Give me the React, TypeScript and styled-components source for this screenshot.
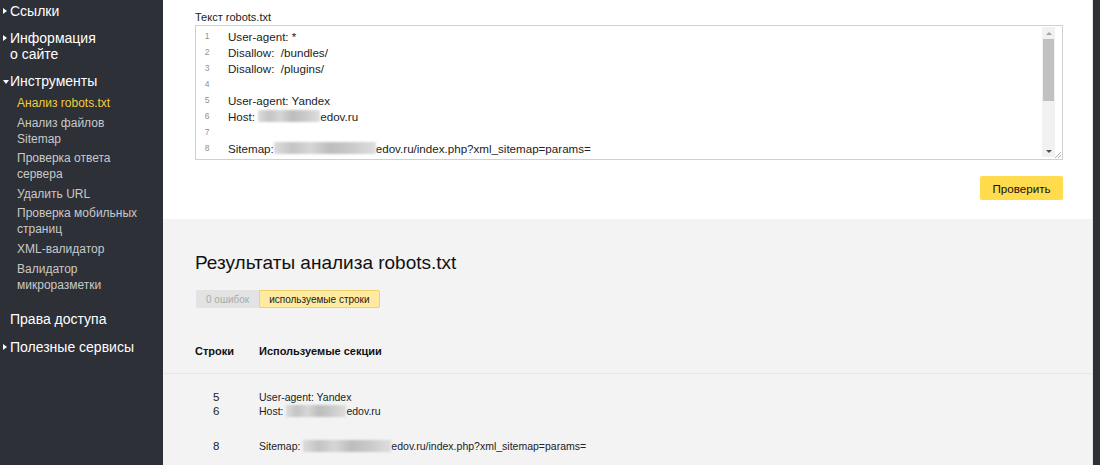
import React from 'react';
import styled, { createGlobalStyle } from 'styled-components';

const GlobalStyle = createGlobalStyle`
  html, body {
    margin: 0;
    padding: 0;
    background: #2d3037;
  }
  body {
    font-family: "Liberation Sans", Arial, sans-serif;
    color: #000;
  }
`;

const Page = styled.div`
  display: grid;
  grid-template-columns: 163px 1fr 7px;
  width: 1100px;
  height: 465px;
  overflow: hidden;
`;

const Sidebar = styled.nav`
  background: #2d3037;
  padding-top: 3px;
  display: flex;
  flex-direction: column;
`;

const MainItem = styled.div<{ $gap: number }>`
  display: flex;
  align-items: flex-start;
  padding-left: 3px;
  margin-top: ${(p) => p.$gap}px;
  font-size: 14px;
  line-height: 16px;
  color: #fff;
`;

const Caret = styled.span<{ $open?: boolean; $hidden?: boolean }>`
  flex: none;
  width: 0;
  height: 0;
  margin: ${(p) => (p.$open ? '7px 1px 0 0' : '5px 3px 0 0')};
  visibility: ${(p) => (p.$hidden ? 'hidden' : 'visible')};
  border-style: solid;
  border-color: transparent;
  border-width: ${(p) => (p.$open ? '4px 3px 0 3px' : '3px 0 3px 4px')};
  ${(p) => (p.$open ? 'border-top-color: #fff;' : 'border-left-color: #fff;')}
`;

const SubList = styled.div`
  display: flex;
  flex-direction: column;
  gap: 3.6px;
  margin-top: 6px;
  padding-left: 17px;
`;

const SubItem = styled.div<{ $active?: boolean }>`
  font-size: 12px;
  line-height: 16px;
  color: ${(p) => (p.$active ? '#f0cd3a' : '#c9c9c9')};
`;

const Main = styled.main`
  display: flex;
  flex-direction: column;
  background: #f3f3f3;
  border-right: 1px solid #e4e4e4;
`;

const TopSection = styled.section`
  background: #fff;
  padding: 9px 29px 19px 32px;
`;

const FieldLabel = styled.div`
  font-size: 11px;
  line-height: 16px;
  color: #222;
`;

const Editor = styled.div`
  position: relative;
  display: flex;
  height: 133px;
  border: 1px solid #d0d0d0;
  background: #fff;
`;

const Lines = styled.div`
  flex: 1;
  padding-top: 2px;
`;

const Line = styled.div`
  display: flex;
  align-items: center;
  height: 16px;
  font-size: 11.6px;
  color: #222;
  white-space: pre;
`;

const LineNo = styled.span`
  width: 22px;
  margin-right: 10px;
  text-align: center;
  font-size: 8.5px;
  color: #8f8f8f;
`;

const Blur = styled.span<{ $w: number }>`
  display: inline-block;
  width: ${(p) => p.$w}px;
  height: 12px;
  vertical-align: middle;
  background: linear-gradient(
    90deg,
    #dcdcdc 0%,
    #c4c4c4 18%,
    #d6d6d6 36%,
    #bdbdbd 55%,
    #c9c9c9 75%,
    #dedede 100%
  );
  filter: blur(1.2px);
`;

const ScrollBar = styled.div`
  display: flex;
  flex-direction: column;
  align-items: center;
  width: 13px;
  margin: 1px 7px 2px 0;
  background: #f1f1f1;
`;

const ScrollArrow = styled.div<{ $down?: boolean }>`
  flex: none;
  height: 12px;
  display: flex;
  align-items: center;
  justify-content: center;
  &::after {
    content: '';
    border-style: solid;
    border-color: transparent;
    border-width: ${(p) => (p.$down ? '3px 3px 0 3px' : '0 3px 3px 3px')};
    ${(p) => (p.$down ? 'border-top-color: #505050;' : 'border-bottom-color: #a3a3a3;')}
  }
`;

const Thumb = styled.div`
  width: 11px;
  height: 62px;
  background: #c1c1c1;
`;

const Track = styled.div`
  flex: 1;
`;

const Grip = styled.svg`
  position: absolute;
  right: 0;
  bottom: 0;
`;

const Actions = styled.div`
  display: flex;
  justify-content: flex-end;
  margin-top: 16px;
`;

const CheckButton = styled.button`
  width: 83px;
  height: 24px;
  border: none;
  border-radius: 2px;
  background: #ffdb4d;
  font-family: inherit;
  font-size: 11.6px;
  color: #111;
  padding: 0;
`;

const ResultsTop = styled.section`
  padding: 31px 32px 0;
`;

const Heading = styled.h2`
  margin: 0;
  font-size: 19px;
  line-height: 26px;
  font-weight: normal;
  color: #111;
`;

const Tabs = styled.div`
  display: flex;
  margin-top: 14px;
  margin-left: 1px;
`;

const Tab = styled.div<{ $active?: boolean }>`
  height: 18px;
  box-sizing: border-box;
  padding: 0 9px;
  display: flex;
  align-items: center;
  font-size: 10px;
  border: 1px solid ${(p) => (p.$active ? '#f1d16e' : '#e3e3e3')};
  background: ${(p) => (p.$active ? '#ffeba0' : '#e3e3e3')};
  color: ${(p) => (p.$active ? '#222' : '#aaa')};
  border-radius: ${(p) => (p.$active ? '0 2px 2px 0' : '2px 0 0 2px')};
`;

const TableHead = styled.div`
  display: flex;
  margin-top: 35px;
  padding: 0 32px 14px;
  border-bottom: 1px solid #e6e6e6;
  font-size: 11px;
  line-height: 16px;
  font-weight: bold;
  color: #111;
`;

const NumCol = styled.div<{ $pad?: number }>`
  width: 64px;
  flex: none;
  box-sizing: border-box;
  padding-left: ${(p) => p.$pad ?? 0}px;
`;

const TableBody = styled.div`
  display: flex;
  flex-direction: column;
  gap: 21px;
  padding: 16px 32px 0;
`;

const Group = styled.div`
  display: flex;
  flex-direction: column;
`;

const Row = styled.div`
  display: flex;
  align-items: center;
  height: 14px;
  font-size: 10.5px;
  color: #222;
  white-space: pre;
`;

const RowNum = styled(NumCol)`
  font-size: 11.5px;
  color: #222;
`;

const menu = [
  'Анализ файлов\nSitemap',
  'Проверка ответа\nсервера',
  'Удалить URL',
  'Проверка мобильных\nстраниц',
  'XML-валидатор',
  'Валидатор\nмикроразметки'
];

const Multiline = ({ text }: { text: string }) => (
  <>
    {text.split('\n').map((t, i) => (
      <div key={i}>{t}</div>
    ))}
  </>
);

export default function App() {
  return (
    <>
      <GlobalStyle />
      <Page>
        <Sidebar>
          <MainItem $gap={0}>
            <Caret />
            <div>Ссылки</div>
          </MainItem>
          <MainItem $gap={11}>
            <Caret />
            <div>
              <Multiline text={'Информация\nо сайте'} />
            </div>
          </MainItem>
          <MainItem $gap={11}>
            <Caret $open />
            <div>Инструменты</div>
          </MainItem>
          <SubList>
            <SubItem $active>Анализ robots.txt</SubItem>
            {menu.map((m) => (
              <SubItem key={m}>
                <Multiline text={m} />
              </SubItem>
            ))}
          </SubList>
          <MainItem $gap={18}>
            <Caret $hidden />
            <div>Права доступа</div>
          </MainItem>
          <MainItem $gap={12}>
            <Caret />
            <div>Полезные сервисы</div>
          </MainItem>
        </Sidebar>

        <Main>
          <TopSection>
            <FieldLabel>Текст robots.txt</FieldLabel>
            <Editor>
              <Lines>
                <Line><LineNo>1</LineNo>User-agent: *</Line>
                <Line><LineNo>2</LineNo>Disallow:  /bundles/</Line>
                <Line><LineNo>3</LineNo>Disallow:  /plugins/</Line>
                <Line><LineNo>4</LineNo></Line>
                <Line><LineNo>5</LineNo>User-agent: Yandex</Line>
                <Line><LineNo>6</LineNo>Host: <Blur $w={62} />edov.ru</Line>
                <Line><LineNo>7</LineNo></Line>
                <Line><LineNo>8</LineNo>Sitemap:<Blur $w={102} />edov.ru/index.php?xml_sitemap=params=</Line>
              </Lines>
              <ScrollBar>
                <ScrollArrow />
                <Thumb />
                <Track />
                <ScrollArrow $down />
              </ScrollBar>
              <Grip width="8" height="8" viewBox="0 0 8 8">
                <path d="M7 1L1 7M7 4L4 7" stroke="#b0b0b0" strokeWidth="1" />
              </Grip>
            </Editor>
            <Actions>
              <CheckButton>Проверить</CheckButton>
            </Actions>
          </TopSection>

          <ResultsTop>
            <Heading>Результаты анализа robots.txt</Heading>
            <Tabs>
              <Tab>0 ошибок</Tab>
              <Tab $active>используемые строки</Tab>
            </Tabs>
          </ResultsTop>
          <TableHead>
            <NumCol>Строки</NumCol>
            <div>Используемые секции</div>
          </TableHead>
          <TableBody>
            <Group>
              <Row><RowNum $pad={18}>5</RowNum>User-agent: Yandex</Row>
              <Row><RowNum $pad={18}>6</RowNum>Host: <Blur $w={60} />edov.ru</Row>
            </Group>
            <Group>
              <Row><RowNum $pad={18}>8</RowNum>Sitemap: <Blur $w={88} />edov.ru/index.php?xml_sitemap=params=</Row>
            </Group>
          </TableBody>
        </Main>
        <div />
      </Page>
    </>
  );
}
